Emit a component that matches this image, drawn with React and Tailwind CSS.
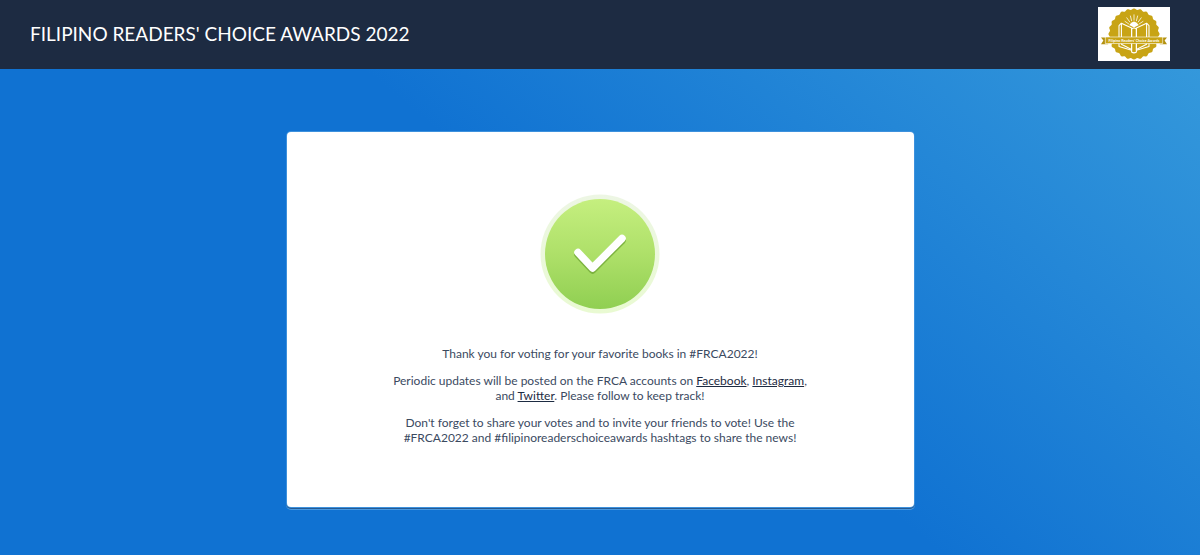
function AwardSeal() {
  const cx = 60;
  const cy = 45;
  const points = Array.from({ length: 144 }, (_, i) => {
    const angle = (i / 144) * Math.PI * 2;
    const r = 41.5 + 1.2 * Math.cos(angle * 24);
    return `${(cx + r * Math.cos(angle)).toFixed(2)},${(cy + r * Math.sin(angle)).toFixed(2)}`;
  }).join(' ');
  return (
    <svg viewBox="0 0 120 90" className="h-[54px] w-[72px] bg-white" role="img" aria-label="Filipino Readers' Choice Awards">
      <polygon points={points} fill="#c8a415" />
      <g stroke="#fff" fill="none" strokeWidth="1.8" strokeLinejoin="round">
        <path d="M35 31 L39 27 L56 35 V72 L35 66 Z M85 31 L81 27 L64 35 V72 L85 66 Z" />
        <path d="M39 27 V62 L56 71 M81 27 V62 L64 71 M56 37 Q60 33 64 37 V75 Q60 78 56 75 Z" />
      </g>
      <g stroke="#fff" strokeWidth="1.3" strokeLinecap="round">
        <path d="M60 22 V13 M56 23 L54 15 M64 23 L66 15 M53 25 L48 18 M67 25 L72 18 M51 28 L45 24 M69 28 L75 24" />
      </g>
      <path d="M52 30 Q60 18 68 30 L60 34 Z" fill="#fff" />
      <path d="M5 51 H17 V62 H5 L9 56 Z M115 51 H103 V62 H115 L111 56 Z" fill="#b39110" />
      <rect x="12" y="50" width="96" height="11" fill="#c8a415" stroke="#fff" strokeWidth="1" />
      <text x="60" y="58" textAnchor="middle" fontFamily="Lato, sans-serif" fontWeight="700" fontSize="6" fill="#fff">
        Filipino Readers' Choice Awards
      </text>
    </svg>
  );
}

function SuccessMark() {
  return (
    <svg viewBox="0 0 120 120" className="size-[120px]" aria-hidden="true">
      <defs>
        <linearGradient id="disc" x1="0" y1="0" x2="0" y2="1">
          <stop offset="0" stopColor="#c5ef7f" />
          <stop offset="0.5" stopColor="#aee069" />
          <stop offset="1" stopColor="#90cf52" />
        </linearGradient>
        <linearGradient id="halo" x1="0" y1="0" x2="0" y2="1">
          <stop offset="0" stopColor="#edf6e4" />
          <stop offset="1" stopColor="#e9fad2" />
        </linearGradient>
      </defs>
      <circle cx="60" cy="60" r="59.5" fill="url(#halo)" />
      <circle cx="60" cy="60" r="55" fill="url(#disc)" />
      <g fill="none" strokeWidth="7.5" strokeLinecap="round" strokeLinejoin="round">
        <path d="M38 60.5 L52.5 76 L82 46.5" stroke="#7cb33f" />
        <path d="M38 58.5 L52.5 74 L82 44.5" stroke="#fff" />
      </g>
    </svg>
  );
}

export default function App() {
  return (
    <div className="flex min-h-screen flex-col font-['Lato',sans-serif]">
      <header className="flex items-center justify-between bg-[#1d2b42] px-[30px] pt-[7px] pb-2">
        <h1 className="text-[19px] leading-7 text-white">FILIPINO READERS' CHOICE AWARDS 2022</h1>
        <AwardSeal />
      </header>
      <main className="flex grow items-start justify-center bg-[linear-gradient(40deg,#1072d2_53%,#3498db)] px-4 pt-[63px] pb-[46px]">
        <section className="flex w-full max-w-[627px] flex-col items-center rounded-[4px] bg-white px-8 pt-[62px] pb-[62px] shadow-[0_0_0_1px_#3d91dd,0_1px_0_1px_#235a94,0_2px_0_1px_#4a9ae2]">
          <SuccessMark />
          <div className="mt-8 flex max-w-[430px] flex-col gap-3 text-center text-[12px] leading-[15px] text-[#3b4a5f]">
            <p>Thank you for voting for your favorite books in #FRCA2022!</p>
            <p>
              Periodic updates will be posted on the FRCA accounts on{' '}
              <a href="#facebook" className="text-[#1d2b42] underline">Facebook</a>,{' '}
              <a href="#instagram" className="text-[#1d2b42] underline">Instagram</a>, and{' '}
              <a href="#twitter" className="text-[#1d2b42] underline">Twitter</a>. Please follow to keep track!
            </p>
            <p>
              Don't forget to share your votes and to invite your friends to vote! Use the #FRCA2022 and
              #filipinoreaderschoiceawards hashtags to share the news!
            </p>
          </div>
        </section>
      </main>
    </div>
  );
}
